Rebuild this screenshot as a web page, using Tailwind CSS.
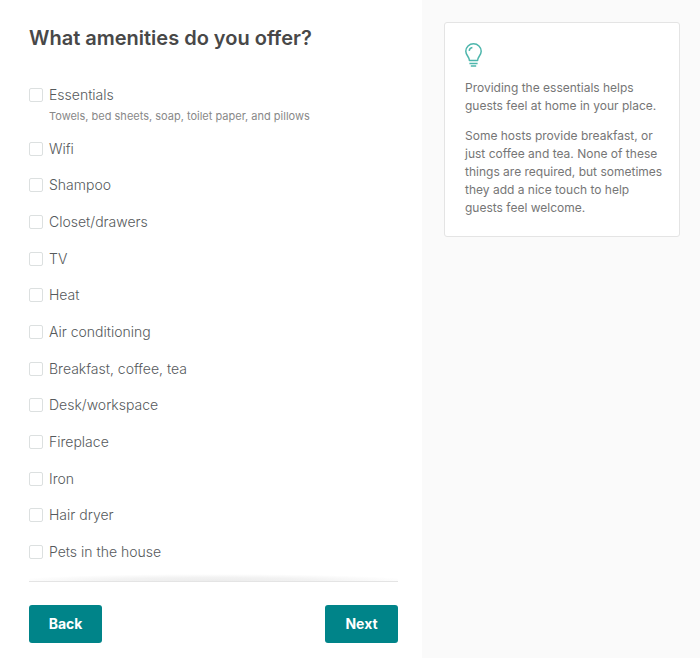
<!DOCTYPE html>
<html lang="en">
<head>
    <meta charset="UTF-8">
    <meta name="viewport" content="width=device-width, initial-scale=1.0">
    <title>What amenities do you offer?</title>
    <script src="https://cdn.jsdelivr.net/npm/@tailwindcss/browser@4"></script>
</head>
<body class="bg-white font-['Inter',sans-serif] text-[#565a5c]">
    <div class="flex min-h-screen">
        <!-- Amenities form -->
        <form class="flex flex-1 flex-col pt-6 pr-6 pb-[15px] pl-[29px]">
            <h1 class="text-xl leading-7 font-semibold text-[#484848]">What amenities do you offer?</h1>

            <ul class="mt-[33px] flex flex-1 flex-col justify-between text-sm leading-5 font-light">
                <li>
                    <label class="flex items-center gap-[6px]">
                        <input type="checkbox" aria-describedby="essentials-note" class="size-[14px] appearance-none rounded-xs border border-[#dce0e0] checked:bg-[#008489]">
                        Essentials
                    </label>
                    <p id="essentials-note" class="mt-[5px] pl-5 text-[11px] leading-3 font-normal text-[#888888]">Towels, bed sheets, soap, toilet paper, and pillows</p>
                </li>
                <li><label class="flex items-center gap-[6px]"><input type="checkbox" class="size-[14px] appearance-none rounded-xs border border-[#dce0e0] checked:bg-[#008489]">Wifi</label></li>
                <li><label class="flex items-center gap-[6px]"><input type="checkbox" class="size-[14px] appearance-none rounded-xs border border-[#dce0e0] checked:bg-[#008489]">Shampoo</label></li>
                <li><label class="flex items-center gap-[6px]"><input type="checkbox" class="size-[14px] appearance-none rounded-xs border border-[#dce0e0] checked:bg-[#008489]">Closet/drawers</label></li>
                <li><label class="flex items-center gap-[6px]"><input type="checkbox" class="size-[14px] appearance-none rounded-xs border border-[#dce0e0] checked:bg-[#008489]">TV</label></li>
                <li><label class="flex items-center gap-[6px]"><input type="checkbox" class="size-[14px] appearance-none rounded-xs border border-[#dce0e0] checked:bg-[#008489]">Heat</label></li>
                <li><label class="flex items-center gap-[6px]"><input type="checkbox" class="size-[14px] appearance-none rounded-xs border border-[#dce0e0] checked:bg-[#008489]">Air conditioning</label></li>
                <li><label class="flex items-center gap-[6px]"><input type="checkbox" class="size-[14px] appearance-none rounded-xs border border-[#dce0e0] checked:bg-[#008489]">Breakfast, coffee, tea</label></li>
                <li><label class="flex items-center gap-[6px]"><input type="checkbox" class="size-[14px] appearance-none rounded-xs border border-[#dce0e0] checked:bg-[#008489]">Desk/workspace</label></li>
                <li><label class="flex items-center gap-[6px]"><input type="checkbox" class="size-[14px] appearance-none rounded-xs border border-[#dce0e0] checked:bg-[#008489]">Fireplace</label></li>
                <li><label class="flex items-center gap-[6px]"><input type="checkbox" class="size-[14px] appearance-none rounded-xs border border-[#dce0e0] checked:bg-[#008489]">Iron</label></li>
                <li><label class="flex items-center gap-[6px]"><input type="checkbox" class="size-[14px] appearance-none rounded-xs border border-[#dce0e0] checked:bg-[#008489]">Hair dryer</label></li>
                <li><label class="flex items-center gap-[6px]"><input type="checkbox" class="size-[14px] appearance-none rounded-xs border border-[#dce0e0] checked:bg-[#008489]">Pets in the house</label></li>
            </ul>

            <!-- Footer with a soft shadow above the rule -->
            <div class="mt-3 h-2 border-b border-[#e4e4e4] bg-[radial-gradient(55%_100%_at_50%_100%,#ececec,#f2f2f2_50%,transparent)]"></div>
            <div class="mt-[23px] flex justify-between">
                <button type="button" class="h-[38px] w-[73px] rounded-[3px] bg-[#008489] text-sm font-bold text-white">Back</button>
                <button type="submit" class="h-[38px] w-[73px] rounded-[3px] bg-[#008489] text-sm font-bold text-white">Next</button>
            </div>
        </form>

        <!-- Tip -->
        <aside class="w-[278px] shrink-0 bg-[#fafafa] pt-[22px] pr-5 pl-[22px]">
            <div class="space-y-3 rounded-[3px] border border-[#e4e4e4] bg-white pt-5 pr-3 pb-[19px] pl-5 text-xs leading-[18px] text-[#767676]">
                <svg class="h-6 w-[18px]" viewBox="0 0 18 24" fill="none" stroke="#4db6ac" stroke-width="1.5" aria-hidden="true">
                    <path d="M4.4 17.6C4.4 13.6.8 12.4.8 8.3a7.7 7.5 0 0 1 15.4 0c0 4.1-3.6 5.3-3.6 9.3z" stroke-linejoin="round"/>
                    <path d="M4.2 7.8C4.4 6 5.6 4.8 7.4 4.5M4.4 20.4h8.2M5.8 23h5.4"/>
                </svg>
                <p>Providing the essentials helps guests feel at home in your place.</p>
                <p>Some hosts provide breakfast, or just coffee and tea. None of these things are required, but sometimes they add a nice touch to help guests feel welcome.</p>
            </div>
        </aside>
    </div>
</body>
</html>
